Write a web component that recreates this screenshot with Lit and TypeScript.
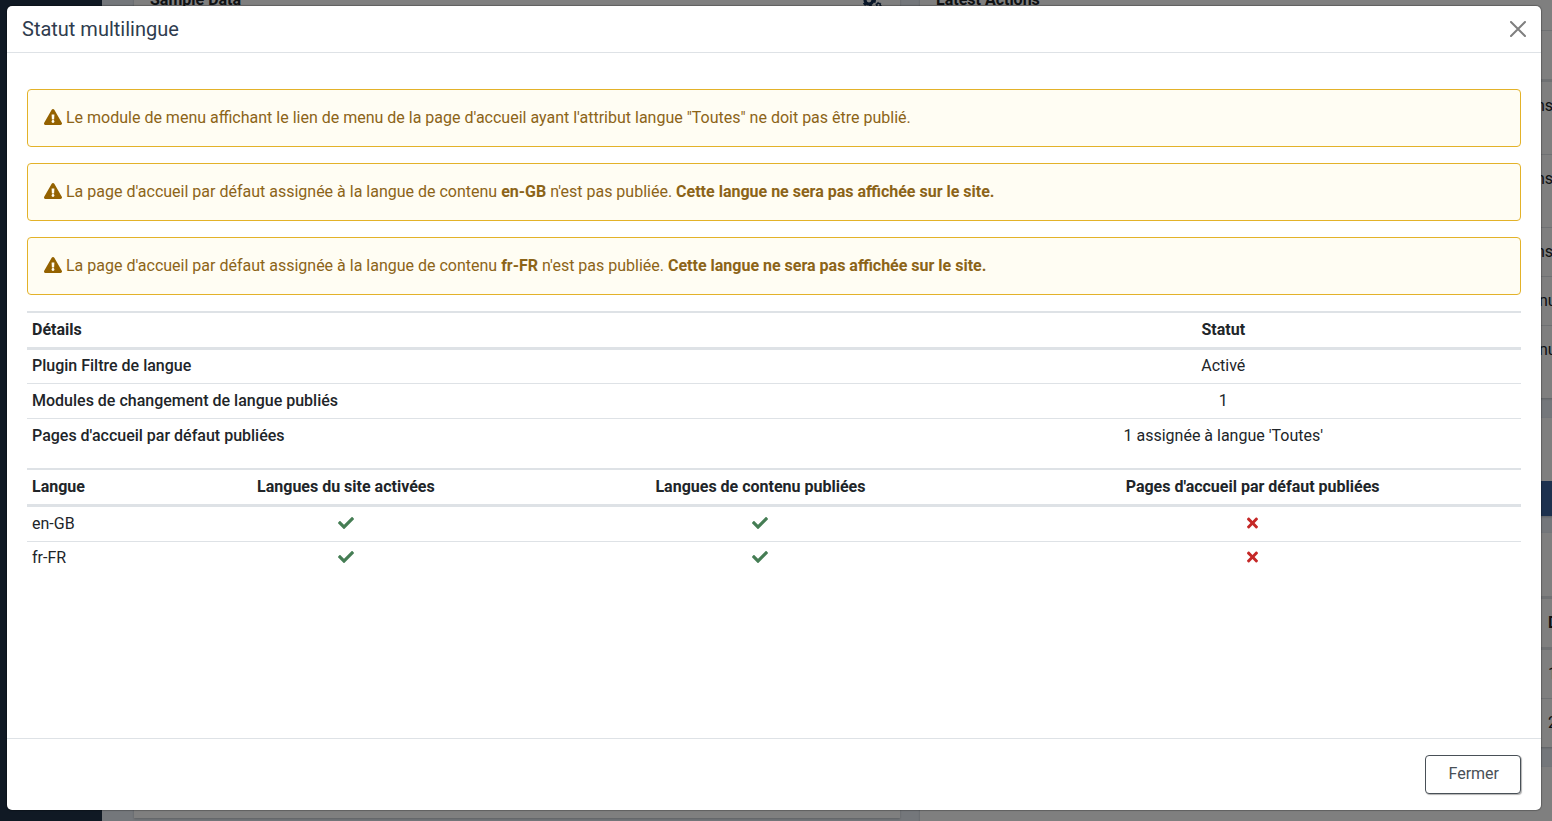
import { LitElement, html, css, svg } from "lit";
import { customElement } from "lit/decorators.js";

const warningIcon = html`<svg class="icon-warning" viewBox="0 0 576 512" aria-hidden="true">
  <path fill="currentColor" d="M569.5 440c18.500 32-4.700 72-41.600 72H48.100c-36.900 0-60-40.100-41.600-72L246.400 24c18.500-32 64.700-32 83.200 0l239.900 416zM288 354c-25.400 0-46 20.600-46 46s20.600 46 46 46 46-20.600 46-46-20.600-46-46-46zm-43.700-165.300l7.400 136c.3 6.400 5.600 11.300 12 11.300h48.600c6.400 0 11.600-5 12-11.300l7.400-136c.4-6.900-5.100-12.700-12-12.700h-63.400c-6.900 0-12.400 5.800-12 12.700z"/>
</svg>`;

const checkIcon = html`<svg class="icon yes" viewBox="0 0 512 512" role="img" aria-label="✓">
  <path fill="currentColor" d="M173.900 439.400L7.500 273c-10-10-10-26.200 0-36.200l36.200-36.200c10-10 26.200-10 36.200 0L192 312.700 432.100 72.600c10-10 26.200-10 36.200 0l36.200 36.200c10 10 10 26.200 0 36.200L210.100 439.400c-10 10-26.200 10-36.200 0z"/>
</svg>`;

const crossIcon = html`<svg class="icon no" viewBox="0 0 352 512" role="img" aria-label="✗">
  <path fill="currentColor" d="M242.700 256l100.100-100.100c12.300-12.300 12.300-32.200 0-44.500l-22.200-22.200c-12.300-12.300-32.200-12.300-44.500 0L176 189.300 75.900 89.200c-12.300-12.300-32.200-12.300-44.500 0L9.200 111.500c-12.300 12.300-12.300 32.200 0 44.500L109.300 256 9.200 356.100c-12.300 12.300-12.300 32.200 0 44.500l22.200 22.200c12.300 12.300 32.200 12.300 44.500 0L176 322.700l100.100 100.100c12.300 12.300 32.200 12.300 44.500 0l22.200-22.200c12.300-12.300 12.300-32.200 0-44.500L242.700 256z"/>
</svg>`;

const gear = (cx: number, cy: number, r: number) => svg`
  <circle cx=${cx} cy=${cy} r=${r} fill="none" stroke="currentColor" stroke-width=${r * 0.8}/>
  <circle cx=${cx} cy=${cy} r=${r * 1.5} fill="none" stroke="currentColor" stroke-width=${r * 0.5}
    stroke-dasharray="${r * 0.7} ${r * 0.87}"/>`;

const gearsIcon = html`<svg class="icon-gears" viewBox="0 0 20 16" aria-hidden="true">
  ${gear(7, 8, 4)}${gear(16.500, 3, 1.8)}${gear(16.500, 13, 1.8)}
</svg>`;

/** Dashboard that stays visible round the dialog. */
@customElement("dashboard-backdrop")
export class DashboardBackdrop extends LitElement {
  static styles = css`
    :host { display: flex; height: 100vh; overflow: hidden; background: #e8eef6; color: #212529;
      font: 400 16px/24px Roboto, sans-serif; }
    .sidebar { flex: none; width: 102px; background: #203248; }
    .columns { flex: 1; display: grid; grid-template-columns: 1fr 1fr; gap: 20px; align-items: start;
      padding-left: 32px; margin: -12px -134px 0 0; }
    .column { display: flex; flex-direction: column; gap: 20px; }
    .card { background: #fff; box-shadow: 0 1px 2px rgba(0, 0, 0, 0.2); }
    .tall { height: 830px; }
    .head { display: flex; justify-content: space-between; align-items: center; height: 24px;
      padding: 0 18px 0 16px; }
    h2 { margin: 0; font: 700 16px/24px Roboto, sans-serif; }
    .icon-gears { width: 20px; height: 16px; color: #132f53; }
    .row { border-top: 1px solid #dee2e6; }
    .strong { border-top-width: 3px; }
    .first { margin-top: 18px; height: 48px; }
    .high { height: 24px; padding: 12px 0 36px 616px; }
    .mid { height: 24px; padding: 12px 0 12px 616px; }
    .low { height: 24px; padding: 12px 0 12px 619px; }
    .last { padding-bottom: 36px; }
    .far { padding-left: 628px; }
    .bold { font-weight: 700; }
    .banner { padding-top: 63px; }
    .bar { height: 35px; background: #3b639d; }
    .list { padding-top: 63px; margin-top: -3px; }
    .rest { height: 80px; }
  `;

  render() {
    return html`
      <div class="sidebar"></div>
      <div class="columns">
        <div class="column">
          <section class="card tall">
            <div class="head"><h2>Sample Data</h2>${gearsIcon}</div>
          </section>
        </div>
        <div class="column">
          <section class="card">
            <div class="head"><h2>Latest Actions</h2></div>
            <div class="row first"></div>
            <div class="row strong high">ns</div>
            <div class="row high">ns</div>
            <div class="row mid">ns</div>
            <div class="row low">nu</div>
            <div class="row low last">nu</div>
          </section>
          <section class="card banner"><div class="bar"></div></section>
          <section class="card list">
            <div class="row strong mid far bold">D</div>
            <div class="row strong mid far">1</div>
            <div class="row mid far">2</div>
          </section>
          <section class="card rest"></section>
        </div>
      </div>
    `;
  }
}

interface LanguageNotice { code: string; }

@customElement("app-root")
export class AppRoot extends LitElement {
  static styles = css`
    :host { display: block; font: 400 16px/24px Roboto, sans-serif; color: #212529; }
    .shade { position: absolute; inset: 0; background: rgba(0, 0, 0, 0.5); }
    .dialog { position: absolute; inset: 6px 11px 11px 7px; display: flex; flex-direction: column;
      background: #fff; border-radius: 5px; box-shadow: 0 0 1px 1px rgba(0, 0, 0, 0.25); }
    .header { display: flex; align-items: center; justify-content: space-between;
      height: 46px; padding: 0 15px; border-bottom: 1px solid #dee2e6; }
    h1 { margin: 0; font: 400 20px/30px Roboto, sans-serif; color: #2f3c4e; }
    .close { display: flex; padding: 0; border: 0; background: none; color: #7f7f7f; cursor: pointer; }
    .close svg { width: 16px; height: 16px; }
    .body { flex: 1; min-height: 0; overflow: auto; padding: 36px 20px 16px; }
    .alert { margin-bottom: 16px; padding: 16px; border: 1px solid #e3b229; border-radius: 4px;
      background: #fffdf3; color: #8c6418; }
    .alert b { font-weight: 700; }
    .icon-warning { width: 18px; height: 16px; vertical-align: -2px; color: #946200; }
    table { width: 100%; margin-bottom: 15px; border-collapse: collapse; }
    th, td { padding: 5px; text-align: center; font-weight: 400; }
    th:first-child { text-align: left; }
    thead th { font-weight: 700; border-top: 2px solid #dee2e6; border-bottom: 3px solid #dee2e6; }
    .details tbody th { font-weight: 500; }
    .details tbody tr:first-child > * { padding-top: 4px; }
    tbody tr + tr > * { border-top: 1px solid #dee2e6; }
    .languages tbody tr:last-child > * { padding-top: 4px; }
    .icon { height: 16px; vertical-align: -2px; }
    .yes { width: 16px; color: #457d54; }
    .no { width: 11px; color: #c52827; }
    .footer { display: flex; justify-content: flex-end; padding: 16px 20px; border-top: 1px solid #dee2e6; }
    .dismiss { padding: 6px 21px 7px 22px; border: 1px solid #495057; border-radius: 4px; background: #fff;
      color: #495057; font: 400 16px/24px Roboto, sans-serif; box-shadow: 1px 1px 1px rgba(0, 0, 0, 0.3);
      cursor: pointer; }
  `;

  private notices: LanguageNotice[] = [{ code: "en-GB" }, { code: "fr-FR" }];

  render() {
    return html`
      <dashboard-backdrop></dashboard-backdrop>
      <div class="shade"></div>
      <div class="dialog" role="dialog" aria-modal="true" aria-labelledby="title">
        <header class="header">
          <h1 id="title">Statut multilingue</h1>
          <button class="close" type="button" aria-label="Fermer">
            <svg viewBox="0 0 16 16" aria-hidden="true">
              <path d="M1 1l14 14M15 1L1 15" fill="none" stroke="currentColor" stroke-width="2" stroke-linecap="round"/>
            </svg>
          </button>
        </header>
        <div class="body">
          <div class="alert">${warningIcon} Le module de menu affichant le lien de menu de la page d'accueil ayant l'attribut langue "Toutes" ne doit pas être publié.</div>
          ${this.notices.map((n) => html`<div class="alert">${warningIcon} La page d'accueil par défaut assignée à la langue de contenu <b>${n.code}</b> n'est pas publiée. <b>Cette langue ne sera pas affichée sur le site.</b></div>`)}
          <table class="details">
            <thead><tr><th scope="col">Détails</th><th scope="col">Statut</th></tr></thead>
            <tbody>
              <tr><th scope="row">Plugin Filtre de langue</th><td>Activé</td></tr>
              <tr><th scope="row">Modules de changement de langue publiés</th><td>1</td></tr>
              <tr><th scope="row">Pages d'accueil par défaut publiées</th><td>1 assignée à langue 'Toutes'</td></tr>
            </tbody>
          </table>
          <table class="languages">
            <thead>
              <tr>
                <th scope="col">Langue</th>
                <th scope="col">Langues du site activées</th>
                <th scope="col">Langues de contenu publiées</th>
                <th scope="col">Pages d'accueil par défaut publiées</th>
              </tr>
            </thead>
            <tbody>
              ${this.notices.map((n) => html`<tr>
                <th scope="row">${n.code}</th><td>${checkIcon}</td><td>${checkIcon}</td><td>${crossIcon}</td>
              </tr>`)}
            </tbody>
          </table>
        </div>
        <footer class="footer"><button class="dismiss" type="button">Fermer</button></footer>
      </div>
    `;
  }
}
